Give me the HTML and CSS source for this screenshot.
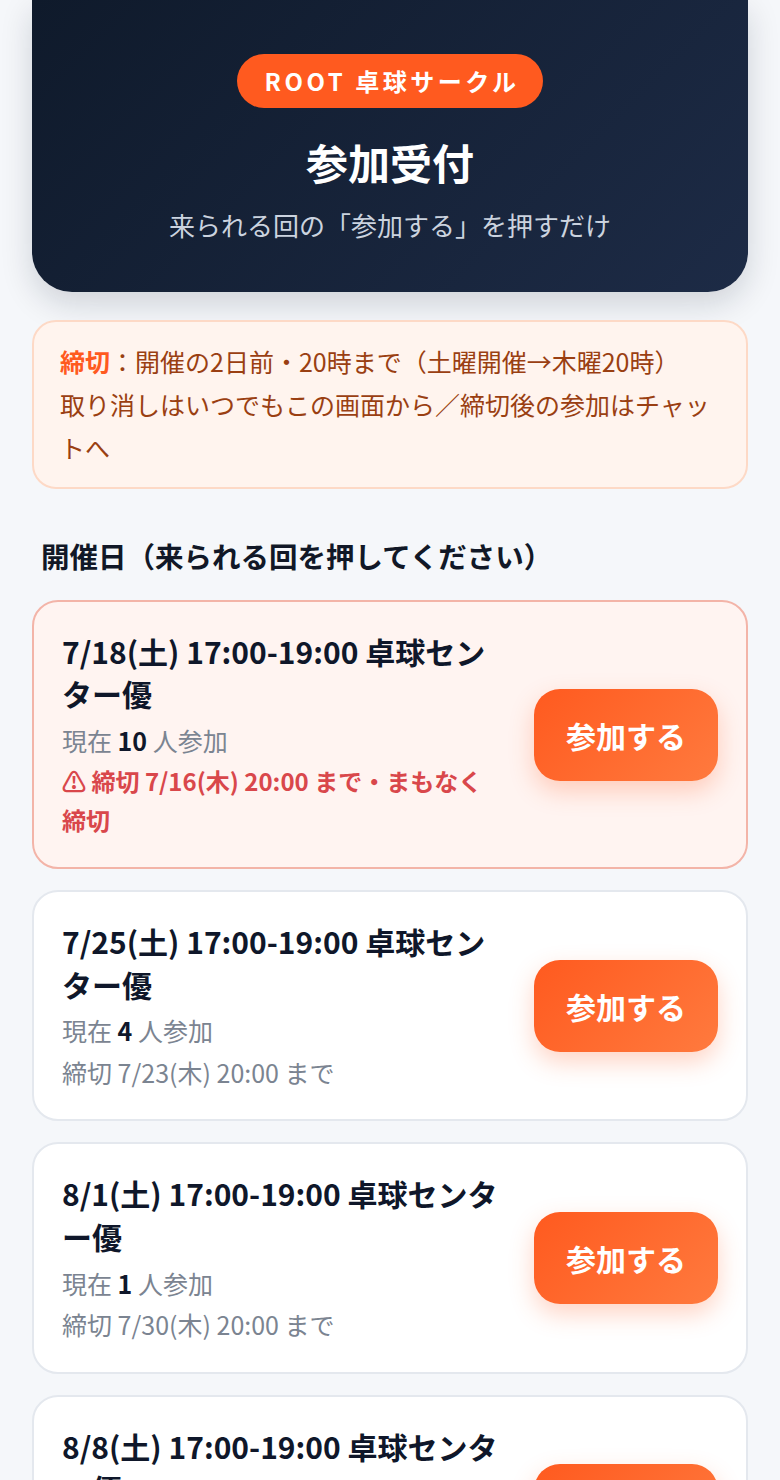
FILE: index.html
```
<!DOCTYPE html>
<html lang="ja">
	<head>
		<meta charset="UTF-8">
		<title>参加受付 | ROOT 卓球サークル</title>
		<link rel="stylesheet" href="styles.css">
	</head>
	<body>
		<div class="page">
			<header class="hero">
				<div class="hero-badge">ROOT 卓球サークル</div>
				<h1 class="hero-title">参加受付</h1>
				<p class="hero-lead">来られる回の「参加する」を押すだけ</p>
			</header>

			<div class="notice">
				<p><b>締切</b>：開催の2日前・20時まで（土曜開催→木曜20時）<br>取り消しはいつでもこの画面から／締切後の参加はチャットへ</p>
			</div>

			<h2 class="sec-title">開催日（来られる回を押してください）</h2>

			<ul class="events">
				<li class="event event-soon">
					<div class="event-info">
						<div class="event-name">7/18(土) 17:00-19:00 卓球センター優</div>
						<div class="event-count">現在 <b>10</b> 人参加</div>
						<div class="event-limit">&#9888;&#xFE0E; 締切 7/16(木) 20:00 まで・まもなく締切</div>
					</div>
					<a class="join-btn" href="javascript:void(0)">参加する</a>
				</li>
				<li class="event">
					<div class="event-info">
						<div class="event-name">7/25(土) 17:00-19:00 卓球センター優</div>
						<div class="event-count">現在 <b>4</b> 人参加</div>
						<div class="event-limit">締切 7/23(木) 20:00 まで</div>
					</div>
					<a class="join-btn" href="javascript:void(0)">参加する</a>
				</li>
				<li class="event">
					<div class="event-info">
						<div class="event-name">8/1(土) 17:00-19:00 卓球センター優</div>
						<div class="event-count">現在 <b>1</b> 人参加</div>
						<div class="event-limit">締切 7/30(木) 20:00 まで</div>
					</div>
					<a class="join-btn" href="javascript:void(0)">参加する</a>
				</li>
				<li class="event">
					<div class="event-info">
						<div class="event-name">8/8(土) 17:00-19:00 卓球センター優</div>
						<div class="event-count">現在 <b>0</b> 人参加</div>
						<div class="event-limit">締切 8/6(木) 20:00 まで</div>
					</div>
					<a class="join-btn" href="javascript:void(0)">参加する</a>
				</li>
			</ul>
		</div>
	</body>
</html>
```

FILE: styles.css
```
* {
	margin: 0;
	padding: 0;
	box-sizing: border-box;
}

body {
	background-color: #f5f7fa;
	font-family: "Noto Sans CJK JP", "Noto Sans", sans-serif;
	color: #0f172a;
}

.page {
	padding: 0 32px 40px;
}

.hero {
	padding: 54px 24px 48px;
	text-align: center;
	border-radius: 0 0 40px 40px;
	background: linear-gradient(135deg, #0f1a2b 0%, #1d2b46 100%);
	box-shadow: 0 12px 32px rgba(15, 23, 42, 0.16);
}

.hero-badge {
	display: inline-block;
	padding: 12px 24px 12px 28px;
	line-height: 30px;
	font-size: 24px;
	font-weight: bold;
	letter-spacing: 3.5px;
	color: #fff;
	background-color: #ff5a1f;
	border-radius: 30px;
}

.hero-title {
	margin-top: 27px;
	font-size: 42px;
	line-height: 1.3;
	font-weight: bold;
	color: #fff;
}

.hero-lead {
	margin-top: 15px;
	font-size: 26px;
	line-height: 1.5;
	color: #cbd3df;
}

.notice {
	margin-top: 28px;
	padding: 18px 26px;
	border: 2px solid #fdd9c6;
	border-radius: 24px;
	background-color: #fff4ee;
	font-size: 25px;
	line-height: 1.72;
	color: #9a3f12;
}

.notice b {
	color: #ff5a1f;
}

.sec-title {
	margin: 46px 9px 23px;
	font-size: 28.5px;
	line-height: 1.48;
	font-weight: bold;
	color: #111827;
}

.events {
	list-style: none;
}

.event {
	display: flex;
	align-items: center;
	gap: 30px;
	margin-bottom: 21px;
	padding: 28px;
	border: 2px solid #e4e8ee;
	border-radius: 26px;
	background-color: #fff;
}

.event-soon {
	border-color: #f3b4a8;
	background-color: #fff4f1;
}

.event-info {
	flex: 1;
	min-width: 0;
}

.event-name {
	font-size: 30px;
	line-height: 1.42;
	font-weight: bold;
	color: #0f172a;
}

.event-count {
	margin-top: 6px;
	font-size: 25px;
	line-height: 1.54;
	color: #7b8491;
}

.event-count b {
	color: #0f172a;
}

.event-limit {
	margin-top: 3px;
	font-size: 25px;
	line-height: 1.54;
	color: #7b8491;
}

.event-soon .event-limit {
	font-size: 24px;
	line-height: 1.6;
	font-weight: bold;
	color: #d9474b;
}

.join-btn {
	flex-shrink: 0;
	display: block;
	width: 184px;
	padding: 23px 0;
	line-height: 46px;
	text-align: center;
	font-size: 30px;
	font-weight: bold;
	color: #fff;
	text-decoration: none;
	border-radius: 26px;
	background: linear-gradient(135deg, #ff5a1f 0%, #ff7a3e 100%);
	box-shadow: 0 10px 24px rgba(255, 100, 45, 0.28);
}
```
